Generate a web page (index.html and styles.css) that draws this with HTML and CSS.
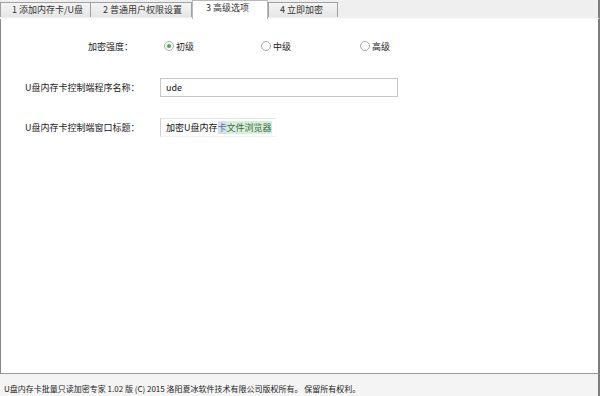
FILE: index.html
```html
<!DOCTYPE html>
<html lang="zh-CN">
<head>
<meta charset="utf-8">
<title>U盘内存卡批量只读加密专家</title>
<link rel="stylesheet" href="styles.css">
</head>
<body>
<div class="window">
  <div class="tabs">
    <div class="tab t1">1 添加内存卡/U盘</div>
    <div class="tab t2">2 普通用户权限设置</div>
    <div class="tab active t3">3 高级选项</div>
    <div class="tab t4">4 立即加密</div>
  </div>
  <div class="panel">
    <div class="row strength">
      <span class="label">加密强度：</span>
      <span class="radio checked"><i class="dot"></i>初级</span>
      <span class="radio r2"><i class="dot"></i>中级</span>
      <span class="radio r3"><i class="dot"></i>高级</span>
    </div>
    <div class="row field f1">
      <span class="flabel">U盘内存卡控制端程序名称：</span>
      <div class="input wide">ude</div>
    </div>
    <div class="row field f2">
      <span class="flabel">U盘内存卡控制端窗口标题：</span>
      <div class="input narrow">加密U盘内存<span class="hl1">卡</span><span class="hl2">文件浏览器</span></div>
    </div>
  </div>
  <div class="status">U盘内存卡批量只读加密专家 1.02 版 (C) 2015 洛阳夏冰软件技术有限公司版权所有。 保留所有权利。</div>
</div>
</body>
</html>
```
FILE: styles.css
```css
html, body {
  margin: 0;
  padding: 0;
  background: #ffffff;
}
body {
  font-family: "Noto Sans CJK SC", "Noto Sans", sans-serif;
  font-size: 9px;
  color: #222;
}
.window {
  width: 600px;
  height: 396px;
  display: flex;
  flex-direction: column;
  box-sizing: border-box;
}
.tabs {
  height: 19px;
  background: #efefef;
  display: flex;
  align-items: flex-end;
  border-right: 2px solid #7d7d7d;
  box-sizing: border-box;
  border-bottom: 1px solid #fafafa;
}
.tab {
  height: 15px;
  box-sizing: border-box;
  border: 1px solid #a0a0a0;
  border-bottom: none;
  background: linear-gradient(#f4f4f4, #e6e6e6);
  line-height: 13px;
  padding-left: 11px;
  color: #333;
  margin-bottom: 1px;
  white-space: nowrap;
}
.t1 { width: 91px; }
.t2 { width: 101px; border-left: none; padding-left: 12px; }
.t3 { width: 76px; }
.t4 { width: 70px; }
.tab.active {
  height: 19px;
  background: #fff;
  margin-bottom: -1px;
  padding-left: 13px;
  line-height: 14px;
  border-color: #b8b8b8;
}
.panel {
  flex: 1;
  border-left: 1px solid #888;
  border-right: 2px solid #7d7d7d;
  border-bottom: 1px solid #9a9a9a;
  padding-top: 20px;
  box-sizing: border-box;
  display: flex;
  flex-direction: column;
}
.row {
  display: flex;
  align-items: center;
}
.strength {
  height: 14px;
  padding-left: 87px;
}
.label { width: 76px; }
.radio {
  display: flex;
  align-items: center;
  gap: 1px;
}
.r2 { margin-left: 67px; }
.r3 { margin-left: 69px; }
.dot {
  width: 10px;
  height: 10px;
  border: 1px solid #aaa;
  border-radius: 50%;
  box-sizing: border-box;
  background: #fff;
  position: relative;
  margin-right: 1px;
}
.checked .dot::after {
  content: "";
  position: absolute;
  left: 2px;
  top: 2px;
  width: 4px;
  height: 4px;
  border-radius: 50%;
  background: #3fae3f;
}
.field {
  padding-left: 24px;
  height: 20px;
}
.f1 { margin-top: 24px; }
.f2 { margin-top: 20px; }
.flabel { width: 135px; white-space: nowrap; }
.input {
  height: 19px;
  box-sizing: border-box;
  border: 1px solid #c8c8c8;
  line-height: 17px;
  padding-left: 5px;
  color: #111;
  background: #fff;
  white-space: nowrap;
}
.wide { width: 238px; }
.narrow { padding-right: 3px; border-color: #e4e4e4 #fafafa #f0f0f0 #d0d0d0; }
.hl1 { background: #cfe0f0; color: #5a7390; }
.hl2 { background: #d6efd9; color: #3a6a48; }
.status {
  height: 22px;
  background: #f4f4f4;
  font-size: 8px;
  line-height: 8px;
  padding: 11px 0 0 4px;
  box-sizing: border-box;
  color: #222;
  white-space: nowrap;
  border-right: 2px solid #7d7d7d;
}
```
